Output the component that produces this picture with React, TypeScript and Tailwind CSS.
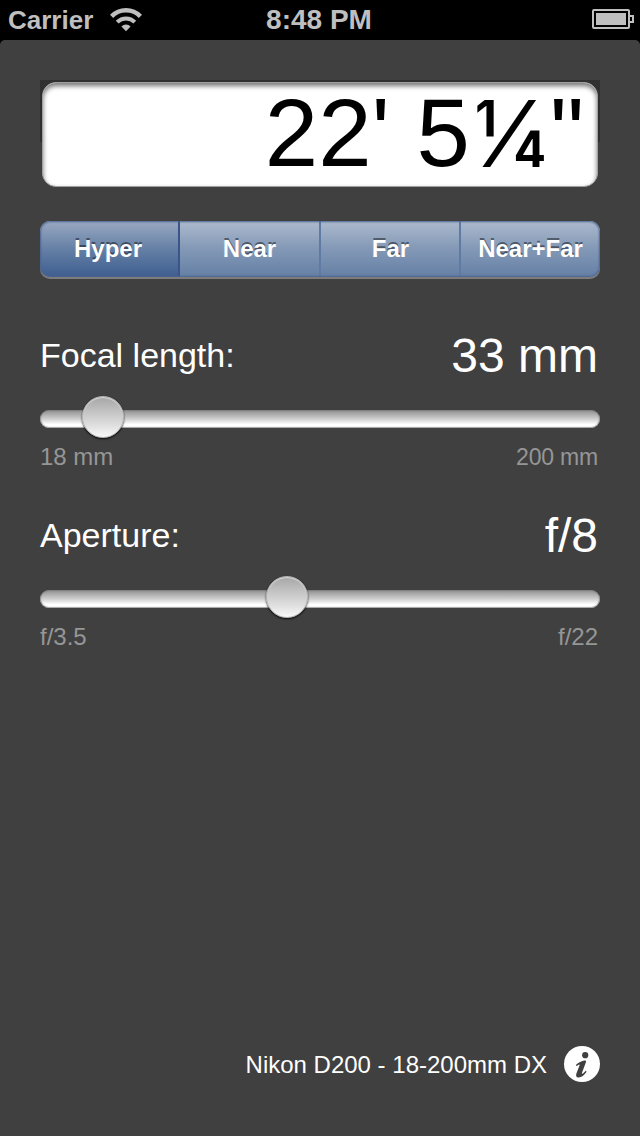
import React from "react";

const segments = ["Hyper", "Near", "Far", "Near+Far"];

const segmentStyles = [
  "w-[140px] border-r-2 border-[#3b558a] bg-linear-to-b from-[#9aa9c2] via-[#6580a5] to-[#3e5e90] pr-[2px]",
  "w-[141px] border-r-2 border-[#5f7aa3] bg-linear-to-b from-[#adbacd] via-[#8398b6] to-[#6480a5]",
  "w-[140px] border-r-2 border-[#5f7aa3] bg-linear-to-b from-[#adbacd] via-[#8398b6] to-[#6480a5] pl-[1px]",
  "w-[139px] bg-linear-to-b from-[#adbacd] via-[#8398b6] to-[#6480a5]",
];

function StatusBar() {
  return (
    <header className="flex h-10 items-center justify-between bg-black pr-[6px] pl-2 font-bold text-[#bfbfbf]">
      <div className="flex w-[257px] items-center">
        <span className="text-[26px] leading-10">Carrier</span>
        <svg className="ml-[17px]" width="32" height="24" viewBox="0 0 32 24" fill="none" stroke="#bfbfbf">
          <path d="M1.6 8.4a20 20 0 0 1 28.8 0" strokeWidth="4.4" />
          <path d="M7.2 14.2a12.4 12.4 0 0 1 17.6 0" strokeWidth="4" />
          <path d="M16 23.2l-4.6-4.8a6.4 6.4 0 0 1 9.2 0z" fill="#bfbfbf" stroke="none" />
        </svg>
      </div>
      <span className="mr-[6px] text-[28px] leading-[38px]">8:48 PM</span>
      <div className="flex w-[255px] justify-end pb-[2px]">
        <svg width="42" height="20" viewBox="0 0 42 20" fill="none" stroke="#bfbfbf" strokeWidth="2">
          <rect x="1" y="1" width="36" height="18" rx="1" />
          <path d="M38 7h3v6h-3" />
          <rect x="4" y="4" width="30" height="12" fill="#bfbfbf" stroke="none" />
        </svg>
      </div>
    </header>
  );
}

function Segmented() {
  return (
    <div className="mt-[34px] h-[58px] rounded-[10px] bg-linear-to-b from-[#56617a] to-[#7d7d7d] pb-[2px]">
      <div className="relative flex h-[56px] overflow-hidden rounded-[10px]">
        {segments.map((label, i) => (
          <button
            key={label}
            className={
              "h-full text-center text-2xl leading-[54px] font-bold text-white [text-shadow:0_-2px_0_rgba(0,0,0,0.45)] " +
              segmentStyles[i]
            }
          >
            {label}
          </button>
        ))}
        <div className="pointer-events-none absolute inset-0 rounded-[10px] shadow-[inset_0_0_2px_1px_#4c6490]" />
      </div>
    </div>
  );
}

interface DialProps {
  label: string;
  value: string;
  min: string;
  max: string;
  offset: number;
  tightMax?: boolean;
}

function Dial({ label, value, min, max, offset, tightMax }: DialProps) {
  return (
    <section className="h-[180px]">
      <div className="flex h-[50px] justify-between text-white">
        <span className="text-[34px] leading-[50px]">{label}</span>
        <span className="pr-[2px] text-[48px] leading-[51px]">{value}</span>
      </div>
      <div className="relative mt-[30px] h-[18px] rounded-full bg-linear-to-b from-[#8f8f8f] via-[#cfcfcf] via-50% to-white to-80% shadow-[inset_0_0_1px_1px_rgba(120,120,120,0.7)]">
        <div
          className="absolute top-[-14px] size-[42px] rounded-full border border-[#b4b4b4] bg-linear-to-b from-[#a6a6a6] to-[#f8f8f8] shadow-[0_1px_2px_rgba(0,0,0,0.9),inset_0_1px_1px_0_rgba(225,225,225,0.85)]"
          style={{ left: offset }}
        />
      </div>
      <div className="mt-[15px] flex justify-between pr-[2px] text-2xl leading-7 text-[#969696]">
        <span>{min}</span>
        <span className={tightMax ? "text-[23px] leading-[28px] tracking-[-0.2px]" : ""}>{max}</span>
      </div>
    </section>
  );
}

export default function App() {
  return (
    <div className="flex h-[1136px] w-[640px] flex-col bg-black font-['Liberation_Sans',Arial,sans-serif]">
      <StatusBar />
      <main className="flex flex-1 flex-col rounded-t-[5px] bg-[#404040] px-10 pt-10">
        <div className="h-[107px] bg-linear-to-b from-[#303030] from-58% to-[#404040] to-58% px-[2px] pt-[2px]">
          <div className="flex h-[105px] justify-end rounded-[14px] border border-[#a0a0a0] bg-white pr-[13px] text-[96px] leading-[99px] whitespace-pre text-black shadow-[inset_0_3px_5px_rgba(0,0,0,0.55)]">
            <span>22' 5</span>
            <span className="flex w-[80px] justify-center pl-[2px] font-['Inter',sans-serif] text-[92px] leading-[101px] font-normal">
              ¼
            </span>
            <span>"</span>
          </div>
        </div>
        <Segmented />
        <div className="mt-[51px]">
          <Dial label="Focal length:" value="33 mm" min="18 mm" max="200 mm" offset={42} tightMax />
          <Dial label="Aperture:" value="f/8" min="f/3.5" max="f/22" offset={226} />
        </div>
        <footer className="mt-auto mb-[54px] flex h-9 items-center justify-end gap-[17px]">
          <span className="pt-[2px] text-2xl leading-9 text-white">Nikon D200 - 18-200mm DX</span>
          <svg width="36" height="36" viewBox="0 0 36 36" aria-label="Info">
            <circle cx="18" cy="18" r="18" fill="#fff" />
            <circle cx="21.2" cy="9.2" r="3.1" fill="#404040" />
            <path
              d="M11.8 18.9C14.4 16.6 17.8 14.9 20.6 14.5C21.9 14.4 22.3 15.1 21.9 16.2L18.1 26.6C17.7 27.9 18.1 28 19 27.4L21.8 24.8L22.6 25.7C20.3 29.2 17.3 31.7 14.4 31.5C12.1 31.3 11.7 29.5 12.4 27.4L15.5 19.4C15.8 18.5 15.5 18.3 14.7 18.7L12.6 20Z"
              fill="#404040"
            />
          </svg>
        </footer>
      </main>
    </div>
  );
}
